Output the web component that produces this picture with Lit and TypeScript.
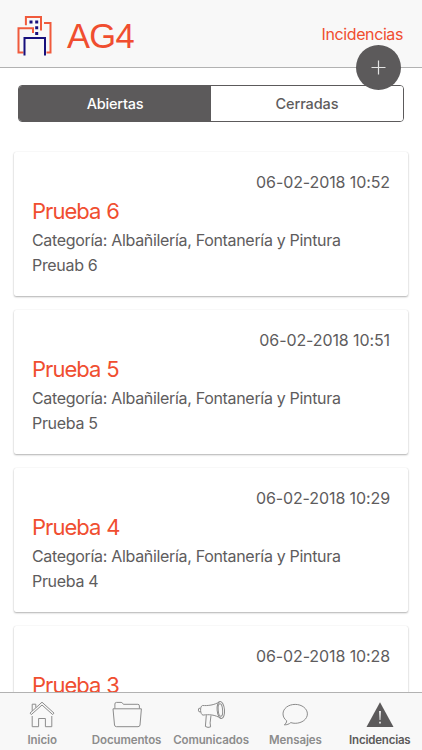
import { LitElement, html, css, svg } from "lit";
import { customElement, property, state } from "lit/decorators.js";
import { classMap } from "lit/directives/class-map.js";

interface Incident {
  title: string;
  date: string;
  category: string;
  text: string;
}

const CATEGORY = "Albañilería, Fontanería y Pintura";

const INCIDENTS: Incident[] = [
  { title: "Prueba 6", date: "06-02-2018 10:52", category: CATEGORY, text: "Preuab 6" },
  { title: "Prueba 5", date: "06-02-2018 10:51", category: CATEGORY, text: "Prueba 5" },
  { title: "Prueba 4", date: "06-02-2018 10:29", category: CATEGORY, text: "Prueba 4" },
  { title: "Prueba 3", date: "06-02-2018 10:28", category: CATEGORY, text: "Prueba 3" },
];

const ICONS = {
  home: svg`<path d="M3.2 15v10.7h6.4v-8.2h6.8v8.2h6.4V15M13 1.2 1 12.1l1.3 1.5L13 4l10.7 9.6L25 12.1zM3.2 9.9V3.2h3.6v3.4"/>`,
  folder: svg`<path d="M-1 7.8h28.4L26 24q-.2 1.7-2 1.7H2.5q-1.8 0-2-1.7zM.9 7.6V3q0-1.6 1.6-1.6h4.6q1 0 1.5.8l.8 1.1h14.4q1.6 0 1.6 1.6v2.7"/>`,
  horn: svg`<ellipse cx="22.8" cy="9" rx="3.7" ry="8.5" transform="rotate(-5 22.8 9)"/><ellipse cx="22.4" cy="9" rx="2.2" ry="6.2" transform="rotate(-5 22.4 9)"/><path d="M21.5.8C16 4.3 10 4.8 4.4 4.5 1.8 5.2 2 13.6 5 14.1c6-.8 11.7-.6 18 3.3M2.6 7.2.8 7.4q-1 1.8.2 3.4l1.8-.1M8.3 14.2l-.9 11.3q2.6 1.6 5.2.4l-.5-4 .9-7.5"/>`,
  chat: svg`<path d="M13.2 3.4C6.3 3.4 1 7.5 1 12.9c0 3.1 1.7 5.3 3.7 6.9-.1 1.7-1 3-2.4 4 2.6.2 4.9-.8 6.5-2.2 1.5.5 2.9.7 4.400.7 6.700 0 12.200-4.100 12.200-9.400S19.900 3.400 13.200 3.400z"/>`,
  alert: svg`<path class="solid" d="M13 1.3 26.5 26H-.5z"/><path class="mark" d="M12.1 10h1.8l-.5 9h-.8zM12.2 20.700h1.600v1.800h-1.600z"/>`,
};

@customElement("incident-card")
class IncidentCard extends LitElement {
  @property({ attribute: false }) item!: Incident;

  static styles = css`
    :host {
      display: block;
      box-sizing: border-box;
      height: 144px;
      padding: 18px 18px 0;
      border-radius: 2px;
      background: #fff;
      box-shadow: 0 1px 2px rgba(0, 0, 0, 0.3), 0 0 1px rgba(0, 0, 0, 0.12);
      color: #5e5c5d;
      font-size: 16px;
      line-height: 25px;
      white-space: nowrap;
    }
    .date {
      text-align: right;
      letter-spacing: -0.1px;
    }
    .title {
      margin: 1px 0;
      color: #f04e30;
      font-size: 22px;
      font-weight: 400;
      line-height: 31px;
      letter-spacing: -0.95px;
      word-spacing: 0.5px;
    }
    .line {
      letter-spacing: -0.32px;
    }
  `;

  render() {
    return html`
      <div class="date">${this.item.date}</div>
      <h2 class="title">${this.item.title}</h2>
      <div class="line">Categoría: ${this.item.category}</div>
      <div class="line">${this.item.text}</div>
    `;
  }
}

@customElement("app-root")
class AppRoot extends LitElement {
  @state() private open = true;

  static styles = css`
    :host {
      display: flex;
      flex-direction: column;
      height: 750px;
      overflow: hidden;
      background: #fff;
      font-family: Inter, "Liberation Sans", sans-serif;
    }
    .header {
      position: relative;
      z-index: 1;
      flex: none;
      box-sizing: border-box;
      height: 68px;
      display: flex;
      align-items: center;
      padding: 0 19px 0 17px;
      background: #f8f8f8;
      border-bottom: 1px solid #b2b2b2;
      color: #f04e30;
    }
    .logo {
      width: 35px;
      height: 41px;
      margin-top: 4px;
    }
    .logo path {
      fill: none;
      stroke: #f05a3c;
      stroke-width: 2;
    }
    .logo .door {
      stroke: #17107d;
    }
    .logo .windows {
      fill: #17107d;
      stroke: none;
    }
    .brand {
      margin: 5px 0 0 15px;
      font: 34.5px/40px "Liberation Sans", sans-serif;
      letter-spacing: -0.7px;
    }
    .section {
      margin: 0 0 0 auto;
      font-size: 16px;
      letter-spacing: -0.4px;
    }
    .add {
      position: absolute;
      right: 21px;
      top: 45px;
      width: 45px;
      height: 45px;
      padding: 0;
      border: 0;
      border-radius: 50%;
      background: #5c5a5b;
    }
    .add svg {
      display: block;
      width: 45px;
      height: 45px;
      fill: none;
      stroke: #e4e4e4;
      stroke-width: 1.2;
    }
    .segments {
      flex: none;
      box-sizing: border-box;
      display: flex;
      height: 37px;
      margin: 17px 18px 0;
      border: 1px solid #5c5a5b;
      border-radius: 4px;
      overflow: hidden;
    }
    .segment {
      flex: 1;
      border: 0;
      padding: 0;
      background: #fff;
      color: #5e5c5d;
      font: 500 14.5px Inter, "Liberation Sans", sans-serif;
      letter-spacing: -0.12px;
    }
    .segment.active {
      background: #5c5a5b;
      color: #fff;
      letter-spacing: -0.2px;
    }
    .list {
      flex: 1;
      min-height: 0;
      overflow: hidden;
      display: flex;
      flex-direction: column;
      gap: 14px;
      padding: 30px 14px 0;
    }
    .list incident-card {
      flex: none;
    }
    .tabs {
      flex: none;
      box-sizing: border-box;
      display: grid;
      grid-template-columns: repeat(5, 1fr);
      height: 58px;
      background: #f8f8f8;
      border-top: 1px solid #b2b2b2;
    }
    .tab {
      display: flex;
      flex-direction: column;
      align-items: center;
      padding-top: 8px;
      color: #8c8c8c;
      font-size: 11.5px;
      font-weight: 600;
      line-height: 14px;
      letter-spacing: -0.1px;
      white-space: nowrap;
    }
    .tab svg {
      width: 26px;
      height: 28px;
      margin-bottom: 4px;
      overflow: visible;
      fill: none;
      stroke: currentColor;
      stroke-width: 1;
    }
    .tab.active {
      color: #5c5a5b;
      letter-spacing: -0.2px;
    }
    .solid {
      fill: #5c5a5b;
      stroke: none;
    }
    .mark {
      fill: #f8f8f8;
      stroke: none;
    }
  `;

  private tab(label: string, icon: unknown, active = false) {
    return html`<div class=${classMap({ tab: true, active })}>
      <svg viewBox="0 0 26 28">${icon}</svg><span>${label}</span>
    </div>`;
  }

  render() {
    return html`
      <header class="header">
        <svg class="logo" viewBox="0 0 35 41">
          <path d="M6.5 37.5H1.5V13.3H16V18M8.9 10.3V2H24V15.5M27 8H33.5V37.5H29.5" />
          <path class="door" d="M7.5 40.5V23H28V40.5" />
          <path class="windows" d="M12.5 5.5h3v3h-3zM18.2 5.5h3v3h-3zM18.2 11.2h3v3h-3zM18.2 17h3v3h-3z" />
        </svg>
        <div class="brand">AG4</div>
        <div class="section">Incidencias</div>
        <button class="add" aria-label="Añadir">
          <svg viewBox="0 0 45 45"><path d="M15.5 22.5h14M22.5 15.5v14" /></svg>
        </button>
      </header>
      <div class="segments">
        <button class=${classMap({ segment: true, active: this.open })} @click=${() => (this.open = true)}>Abiertas</button>
        <button class=${classMap({ segment: true, active: !this.open })} @click=${() => (this.open = false)}>Cerradas</button>
      </div>
      <main class="list">
        ${INCIDENTS.map((item) => html`<incident-card .item=${item}></incident-card>`)}
      </main>
      <nav class="tabs">
        ${this.tab("Inicio", ICONS.home)}
        ${this.tab("Documentos", ICONS.folder)}
        ${this.tab("Comunicados", ICONS.horn)}
        ${this.tab("Mensajes", ICONS.chat)}
        ${this.tab("Incidencias", ICONS.alert, true)}
      </nav>
    `;
  }
}
